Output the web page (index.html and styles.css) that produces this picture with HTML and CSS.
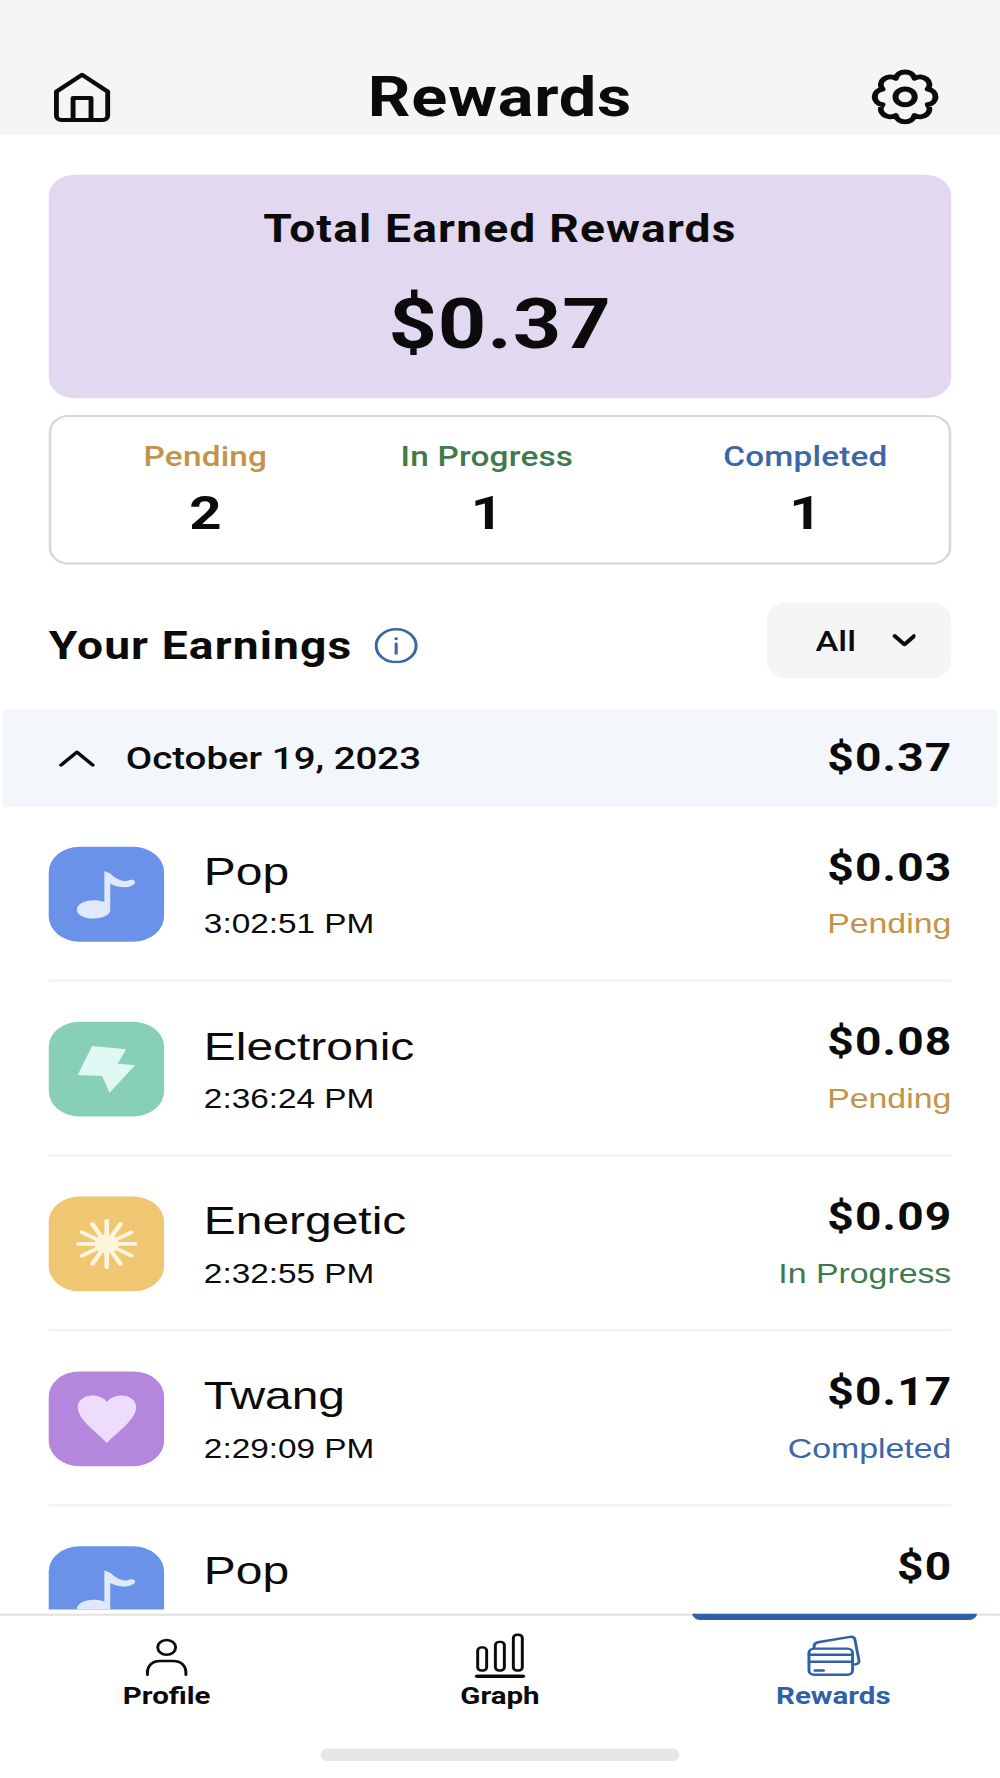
FILE: index.html
```html
<!DOCTYPE html>
<html lang="en">
<head>
<meta charset="utf-8">
<title>Rewards</title>
<link rel="stylesheet" href="styles.css">
</head>
<body>
<div class="app">
  <header class="header">
    <svg class="home-icon" viewBox="0 -1 24 26"><path d="M2 9.500 12 1.500l10 8v11.500a2 2 0 0 1-2 2H4a2 2 0 0 1-2-2Z"/><path d="M8.500 23v-10.500h7V23"/></svg>
    <h1 class="title">Rewards</h1>
    <svg class="gear-icon" viewBox="0 0 24 24"><path d="M19.58 8.86A3.2 3.2 0 0 1 19.58 15.14A3.2 3.2 0 0 1 15.14 19.58A3.2 3.2 0 0 1 8.86 19.58A3.2 3.2 0 0 1 4.42 15.14A3.2 3.2 0 0 1 4.42 8.86A3.2 3.2 0 0 1 8.86 4.42A3.2 3.2 0 0 1 15.14 4.42A3.2 3.2 0 0 1 19.58 8.86Z"/><circle cx="12" cy="12" r="3.2"/></svg>
  </header>

  <main class="scroll">
    <section class="total-card">
      <div class="total-label">Total Earned Rewards</div>
      <div class="total-value">$0.37</div>
    </section>

    <section class="stats">
      <div class="stat stat-first"><div class="stat-label pending">Pending</div><div class="stat-num">2</div></div>
      <div class="stat stat-second"><div class="stat-label progress">In Progress</div><div class="stat-num">1</div></div>
      <div class="stat stat-third"><div class="stat-label completed">Completed</div><div class="stat-num">1</div></div>
    </section>

    <section class="earnings-head">
      <div class="earnings-title">
        <h2>Your Earnings</h2>
        <svg class="info-icon" viewBox="0 0 17 17"><circle cx="8.500" cy="8.500" r="7.800"/><path d="M8.500 7.600v4.600"/><circle class="info-dot" cx="8.500" cy="5.200" r=".7"/></svg>
      </div>
      <div class="dropdown">
        <span>All</span>
        <svg class="drop-chev" viewBox="0 0 10 6"><path d="M1 .8 5 5l4-4.200"/></svg>
      </div>
    </section>

    <section class="date-row">
      <svg class="date-chev" viewBox="0 0 14 8"><path d="M.8 7.200 7 1l6.200 6.200"/></svg>
      <span class="date-text">October 19, 2023</span>
      <span class="date-amt">$0.37</span>
    </section>

    <article class="row">
      <div class="tile tile-blue"><svg viewBox="0 0 45 45"><use href="#note"/></svg></div>
      <div class="row-main"><div class="name">Pop</div><div class="time">3:02:51 PM</div></div>
      <div class="row-side"><div class="amt">$0.03</div><div class="status pending">Pending</div></div>
    </article>
    <article class="row">
      <div class="tile tile-green"><svg viewBox="0 0 45 45"><path class="glyph-green" d="M16.9 11.5 30.2 13.1 26.9 20 33.7 20.7 23.7 33.7 20.8 25.8 11.3 25.3Z"/></svg></div>
      <div class="row-main"><div class="name">Electronic</div><div class="time">2:36:24 PM</div></div>
      <div class="row-side"><div class="amt">$0.08</div><div class="status pending">Pending</div></div>
    </article>
    <article class="row">
      <div class="tile tile-yellow"><svg viewBox="0 0 45 45"><path class="rays" d="M11.600 22.500H33.600M13 17 32.200 28M17 13 28 32M22.600 11.500V33.500M28 13 17 32M32.200 17 13 28"/><circle class="sun" cx="22.600" cy="22.500" r="4.600"/></svg></div>
      <div class="row-main"><div class="name">Energetic</div><div class="time">2:32:55 PM</div></div>
      <div class="row-side"><div class="amt">$0.09</div><div class="status progress">In Progress</div></div>
    </article>
    <article class="row">
      <div class="tile tile-purple"><svg viewBox="0 0 45 45"><path class="glyph-purple" d="M22.700 34C19 29 11.300 23 11.300 17 11.300 13.500 14 11.400 17 11.400 19.500 11.400 21.500 12.600 22.700 14.500 23.900 12.600 25.900 11.400 28.400 11.400 31.400 11.400 34.100 13.500 34.100 17 34.100 23 26.400 29 22.700 34Z"/></svg></div>
      <div class="row-main"><div class="name">Twang</div><div class="time">2:29:09 PM</div></div>
      <div class="row-side"><div class="amt">$0.17</div><div class="status completed">Completed</div></div>
    </article>
    <article class="row">
      <div class="tile tile-blue"><svg viewBox="0 0 45 45"><use href="#note"/></svg></div>
      <div class="row-main"><div class="name">Pop</div></div>
      <div class="row-side"><div class="amt">$0</div></div>
    </article>
  </main>

  <svg class="defs" width="0" height="0"><defs><g id="note"><path class="glyph-blue" d="M21.700 11.500 24 12.600C26 15 29 17 31 16 33 15 34.200 16.500 33.500 17.500 31.500 20 27 19.500 24 17.500V30C24 32.400 21 34 17.500 34 13.500 34 11 32.200 11 29.700 11 27.200 14 25.400 17.500 25.400 19 25.400 20.500 25.700 21.700 26.200Z"/></g></defs></svg>

  <nav class="nav">
    <div class="tabs">
      <div class="tab">
        <svg viewBox="0 0 24 24"><circle cx="12" cy="8" r="3.500"/><path d="M4.500 21v-1c0-3.500 2-5.500 5-5.500h5c3 0 5 2 5 5.500v1"/></svg>
        <span>Profile</span>
      </div>
      <div class="tab">
        <svg viewBox="0 0 24 24"><rect x="3.300" y="8" width="3.500" height="11" rx="1.500"/><rect x="10.200" y="5.400" width="3.500" height="13.600" rx="1.500"/><rect x="17.200" y="2" width="3.500" height="17" rx="1.500"/><path class="graph-base" d="M3 21.700h18"/></svg>
        <span>Graph</span>
      </div>
      <div class="tab tab-active">
        <svg viewBox="0 0 24 24"><rect x="2.500" y="8.600" width="17" height="12.400" rx="2"/><path d="M2.500 11.500h17M2.500 14.800h17M4.800 19h3.400M4.500 8.400V7.500c0-1 .6-1.700 1.500-1.900L18.500 3c1-.2 1.700.3 1.900 1.200L22 14.200c.2 1-.4 1.700-1.500 1.900l-1 .2"/></svg>
        <span>Rewards</span>
      </div>
    </div>
    <div class="home-bar"></div>
  </nav>
</div>
</body>
</html>
```

FILE: styles.css
```css
* { box-sizing: border-box; }
html, body { margin: 0; padding: 0; background: #fff; overflow: hidden; height: 100%; }

/* Design space is a 390x844 phone, stretched to fill the capture */
.app {
  width: 390px;
  height: 844px;
  display: flex;
  flex-direction: column;
  background: #fff;
  color: #0b0b0b;
  font-family: Roboto, "Liberation Sans", sans-serif;
  transform: scale(2.5641, 2.1066);
  transform-origin: 0 0;
}
svg { display: block; fill: none; stroke: currentColor; stroke-linecap: round; stroke-linejoin: round; }

.header {
  flex: none;
  height: 64px;
  background: #f5f5f5;
  padding: 26px 20px 0;
  display: grid;
  grid-template-columns: 1fr auto 1fr;
  align-items: start;
}
.home-icon { width: 24px; height: 26px; margin-top: 6.500px; stroke-width: 1.900; }
.gear-icon { width: 28px; height: 28px; margin: 6px 3.200px 0 0; justify-self: end; stroke-width: 2; }
.title { margin: 1px 0 0; font-size: 26px; line-height: 38px; font-weight: 700; letter-spacing: .3px; }

.scroll { flex: 1; min-height: 0; overflow: hidden; margin-bottom: 1.500px; }

.total-card {
  margin: 19px 19px 0;
  height: 106px;
  padding-top: 15px;
  border-radius: 10px;
  background: #e2d8f0;
  text-align: center;
}
.total-label { font-size: 18px; line-height: 22px; font-weight: 700; letter-spacing: .46px; }
.total-value { margin-top: 14px; font-size: 33px; line-height: 40px; font-weight: 700; letter-spacing: .35px; }

.stats {
  margin: 8px 19px 0;
  height: 71px;
  padding: 10.500px 0 0 36px;
  border: 1px solid #d8d8d8;
  border-radius: 8px;
  display: flex;
}
.stat { text-align: center; }
.stat-second { margin-left: 52px; }
.stat-third { margin-left: 58.500px; }
.stat-label { font-size: 13px; line-height: 16px; font-weight: 500; white-space: nowrap; letter-spacing: .08px; }
.stat-num { margin-top: 5.500px; font-size: 22px; line-height: 28px; font-weight: 700; }
.pending { color: #c3934a; }
.progress { color: #3f7a4a; }
.completed { color: #3c66a6; }

.earnings-head {
  margin: 18px 19px 0;
  height: 36px;
  display: flex;
  justify-content: space-between;
}
.earnings-title { display: flex; align-items: center; gap: 9px; height: 36px; margin-top: 3px; }
.earnings-title h2 { margin: 0; font-size: 18px; line-height: 24px; font-weight: 700; letter-spacing: .44px; }
.info-icon { width: 17px; height: 17px; margin-top: -1px; stroke: #3c66a6; stroke-width: 1.200; }
.info-dot { fill: #3c66a6; stroke: none; }
.dropdown {
  width: 72px;
  height: 36px;
  padding: 0 14px 0 19px;
  border-radius: 8px;
  background: #f5f5f5;
  display: flex;
  align-items: center;
  justify-content: space-between;
  font-size: 13.500px;
  font-weight: 500;
}
.drop-chev { width: 9.500px; height: 6px; stroke-width: 1.800; }

.date-row {
  margin: 15px 1px 0;
  height: 45.500px;
  padding: 0 18px 0 21.500px;
  background: #f3f6fa;
  display: flex;
  align-items: center;
}
.date-chev { width: 14px; height: 8px; stroke-width: 1.500; }
.date-text { margin-left: 12.500px; font-size: 15px; font-weight: 500; }
.date-amt { margin: 0 -.45px 0 auto; font-size: 18px; font-weight: 700; letter-spacing: .45px; }

.row {
  margin: 0 19px;
  height: 83px;
  padding-top: 18px;
  border-bottom: 1px solid #f0f0f0;
  display: flex;
  align-items: flex-start;
  font-family: "Liberation Sans", Arial, sans-serif;
}
.row:last-child { border-bottom: 0; }
.tile { width: 45px; height: 45px; margin-top: 1.500px; border-radius: 12px; flex: none; }
.tile svg { width: 45px; height: 45px; stroke: none; }
.tile-blue { background: #6a92e8; }
.tile-green { background: #88cfb8; }
.tile-yellow { background: #efc672; }
.tile-purple { background: #b586dd; }
.glyph-blue { fill: #dfe9fb; stroke: none; }
.glyph-green { fill: #e0f8f3; stroke: none; }
.glyph-purple { fill: #eddcfb; stroke: none; }
.rays { stroke: #fdf6dc; stroke-width: 1.800; }
.sun { fill: #fdf6dc; }

.row-main { margin-left: 15.500px; margin-top: 1px; }
.name { font-size: 18.700px; line-height: 24px; }
.time { margin-top: 5.500px; font-size: 13px; line-height: 16px; }
.row-side { margin: 0 -.45px 0 auto; text-align: right; }
.amt { font-family: Roboto, "Liberation Sans", sans-serif; font-size: 18px; line-height: 22px; font-weight: 700; letter-spacing: .45px; }
.status { margin: 8.500px .45px 0 0; font-size: 13.200px; line-height: 16px; }

.defs { position: absolute; width: 0; height: 0; }

.nav { flex: none; height: 78.500px; border-top: 1px solid #e2e2e2; }
.tabs { display: grid; grid-template-columns: repeat(3, 130px); }
.tab {
  position: relative;
  padding-top: 7px;
  display: flex;
  flex-direction: column;
  align-items: center;
  font-size: 11.500px;
  line-height: 14px;
  font-weight: 700;
}
.tab svg { width: 24px; height: 24px; margin-bottom: .7px; stroke-width: 1.150; }
.graph-base { stroke-width: 1.600; }
.tab-active { color: #2f62a5; }
.tab-active::before {
  content: "";
  position: absolute;
  top: -.5px;
  left: 9.500px;
  right: 9.500px;
  height: 2.500px;
  background: #2f62a5;
  border-radius: 0 0 3px 3px;
}
.home-bar { width: 140px; height: 6px; margin: 17.800px auto 0; border-radius: 3px; background: #e6e6e6; }
```
